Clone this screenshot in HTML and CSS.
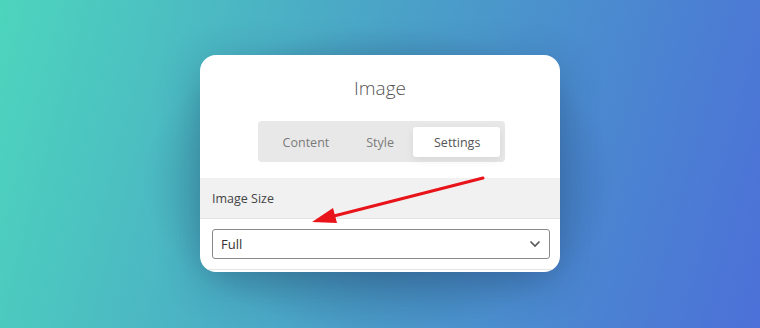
FILE: index.html
```html
<!DOCTYPE html>
<html lang="en">
<head>
    <meta charset="UTF-8">
    <meta name="viewport" content="width=device-width, initial-scale=1.0">
    <title>Image Settings</title>
    <link rel="stylesheet" href="styles.css">
</head>
<body>
    <div class="panel">
        <h1 class="panel-title">Image</h1>
        <div class="tabs">
            <span class="tab">Content</span>
            <span class="tab">Style</span>
            <span class="tab active">Settings</span>
        </div>
        <div class="section-head">Image Size</div>
        <div class="section-body">
            <div class="select">
                <span>Full</span>
                <svg class="chevron" width="12" height="8" viewBox="0 0 12 8">
                    <path d="M1.5 1.5 L6 6 L10.5 1.5" fill="none" stroke="#555" stroke-width="1.6"/>
                </svg>
            </div>
        </div>

        <!-- annotation arrow -->
        <svg class="arrow" width="180" height="50" viewBox="0 0 180 50">
            <line x1="173" y1="2" x2="20" y2="41" stroke="#e8141a" stroke-width="3" stroke-linecap="round"/>
            <polygon points="2,46 23,32 27,47" fill="#e8141a"/>
        </svg>
    </div>
</body>
</html>
```

FILE: styles.css
```css
body {
    font-family: "Open Sans", "Noto Sans", Arial, sans-serif;
    margin: 0;
    padding: 0;
    width: 760px;
    height: 328px;
    overflow: hidden;
    display: flex;
    align-items: flex-start;
    justify-content: center;
    background: linear-gradient(105deg, #4dd5bd 0%, #4a9fc8 50%, #4c70d8 100%);
    position: relative;
}

body::before {
    content: "";
    position: absolute;
    left: 140px;
    top: 25px;
    width: 480px;
    height: 310px;
    background: radial-gradient(ellipse at center, rgba(30, 50, 90, 0.5) 0%, rgba(30, 50, 90, 0) 70%);
}

.panel {
    position: relative;
    margin-top: 55px;
    width: 360px;
    height: 217px;
    background-color: #fff;
    border-radius: 16px;
    overflow: hidden;
    box-shadow: 0 10px 40px rgba(20, 40, 80, 0.3);
    display: flex;
    flex-direction: column;
    align-items: center;
}

.panel-title {
    margin: 20px 0 0;
    height: 27px;
    font-size: 19px;
    font-weight: 300;
    color: #555;
    line-height: 27px;
}

.tabs {
    margin-top: 19px;
    margin-left: 3px;
    display: flex;
    align-items: center;
    padding: 6px 5px 5px 9px;
    background-color: #e8e8e8;
    border-radius: 4px;
}

.tab {
    font-size: 12.5px;
    color: #7a7a7a;
    padding: 0 16px;
    height: 30px;
    line-height: 31px;
}

.tab:first-child {
    padding-right: 21px;
}

.tab:nth-child(2) {
    padding-right: 19px;
}

.tab.active {
    background-color: #fff;
    color: #555;
    border-radius: 3px;
    padding: 0 20px 0 21px;
    box-shadow: 0 3px 8px rgba(0, 0, 0, 0.08);
}

.section-head {
    margin-top: 16px;
    align-self: stretch;
    height: 40px;
    line-height: 41px;
    padding: 0 12px;
    background-color: #f1f1f1;
    border-bottom: 1px solid #e3e3e3;
    font-size: 12.5px;
    color: #444;
}

.section-body {
    align-self: stretch;
    padding: 10px 10px 10px 12px;
    border-bottom: 1px solid #e6e6e6;
}

.select {
    height: 28px;
    border: 1px solid #8a8a8a;
    border-radius: 3px;
    display: flex;
    align-items: center;
    justify-content: space-between;
    padding: 0 8px 0 8px;
    font-size: 13px;
    color: #333;
}

.arrow {
    position: absolute;
    left: 110px;
    top: 121px;
}
```
